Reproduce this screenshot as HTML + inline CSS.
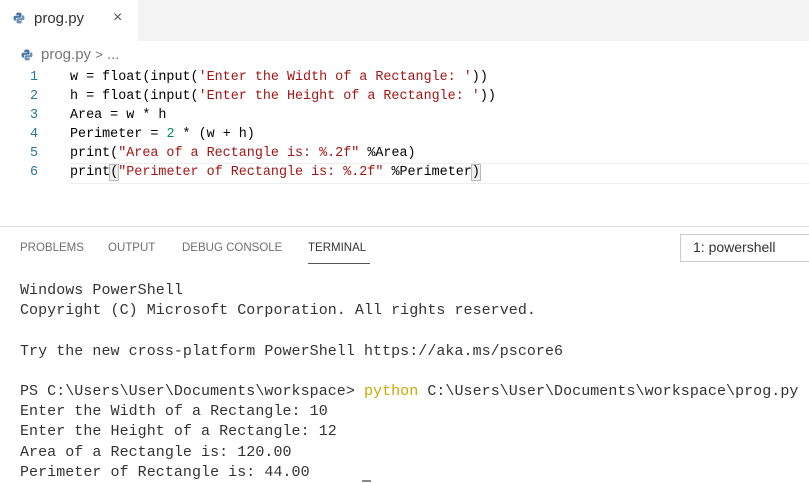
<!DOCTYPE html>
<html><head><style>
*{margin:0;padding:0;box-sizing:border-box}
body{width:809px;height:483px;overflow:hidden;background:#fff;position:relative;font-family:"Liberation Sans",sans-serif}
.tabbar{position:absolute;left:0;top:0;width:809px;height:41px;background:#f3f3f3}
.tab{position:absolute;left:0;top:0;width:138px;height:41px;background:#fff}
.abs{position:absolute;white-space:pre}
.code{font-family:"Liberation Mono",monospace;font-size:13.4px;color:#000}
.ln{font-family:"Liberation Mono",monospace;font-size:13.4px;color:#237893}
.s{color:#a31515}.n{color:#098658}
.term{font-family:"Liberation Mono",monospace;font-size:15px;color:#333}
.pt{font-size:11.5px;color:#6f6f6f;top:242px}
</style></head><body>
<div class="tabbar"><div class="tab"></div></div>
<svg class="abs" style="left:13px;top:12px" width="12" height="12" viewBox="0 0 12 12"><path d="M6 0.5C3 0.5 3.3 1.8 3.3 1.8V3.2h2.8v.5H2.2S0.5 3.5 0.5 6.1s1.5 2.5 1.5 2.5h.9V7.3s-.1-1.5 1.5-1.5h2.7s1.4 0 1.4-1.4V2S8.7.5 6 .5z" fill="#4a76a8"/><path d="M6 11.5c3 0 2.7-1.3 2.7-1.3V8.8H5.9v-.5h3.9s1.7.2 1.7-2.4-1.5-2.5-1.5-2.5h-.9v1.3s.1 1.5-1.5 1.5H4.9s-1.4 0-1.4 1.4V10S3.3 11.5 6 11.5z" fill="#6d92bd"/></svg>
<div class="abs" style="left:34px;top:10px;font-size:15px;color:#333">prog.py</div>
<div class="abs" style="left:113px;top:9px;font-size:16px;color:#555">×</div>
<svg class="abs" style="left:21px;top:49px" width="12" height="12" viewBox="0 0 12 12"><path d="M6 0.5C3 0.5 3.3 1.8 3.3 1.8V3.2h2.8v.5H2.2S0.5 3.5 0.5 6.1s1.5 2.5 1.5 2.5h.9V7.3s-.1-1.5 1.5-1.5h2.7s1.4 0 1.4-1.4V2S8.7.5 6 .5z" fill="#4a76a8"/><path d="M6 11.5c3 0 2.7-1.3 2.7-1.3V8.8H5.9v-.5h3.9s1.7.2 1.7-2.4-1.5-2.5-1.5-2.5h-.9v1.3s.1 1.5-1.5 1.5H4.9s-1.4 0-1.4 1.4V10S3.3 11.5 6 11.5z" fill="#6d92bd"/></svg>
<div class="abs" style="left:41px;top:46px;font-size:15px;color:#777">prog.py <span style="font-size:13px">&gt;</span> ...</div>
<div class="abs" style="left:70px;top:163px;width:739px;height:21px;border-top:1px solid #eee;border-bottom:1px solid #eee"></div>
<div class="abs ln" style="left:30px;top:68px;line-height:19px">1
2
3
4
5
6</div>
<div class="abs code" style="left:70px;top:68px;line-height:19px">w = float(input(<span class="s">'Enter the Width of a Rectangle: '</span>))
h = float(input(<span class="s">'Enter the Height of a Rectangle: '</span>))
Area = w * h
Perimeter = <span class="n">2</span> * (w + h)
print(<span class="s">"Area of a Rectangle is: %.2f"</span> %Area)
print<span style="outline:1px solid #b9b9b9;background:#eee">(</span><span class="s">"Perimeter of Rectangle is: %.2f"</span> %Perimeter<span style="outline:1px solid #b9b9b9;background:#eee">)</span></div>
<div class="abs" style="left:0;top:226px;width:809px;height:1px;background:#ddd"></div>
<div class="abs pt" style="left:20px">PROBLEMS</div>
<div class="abs pt" style="left:108px">OUTPUT</div>
<div class="abs pt" style="left:182px">DEBUG CONSOLE</div>
<div class="abs pt" style="left:308px;color:#333">TERMINAL</div>
<div class="abs" style="left:308px;top:263px;width:62px;height:1px;background:#555"></div>
<div class="abs" style="left:680px;top:234px;width:135px;height:28px;border:1px solid #ccc;font-size:14px;color:#333;padding:4px 0 0 12px">1: powershell</div>
<div class="abs term" style="left:20px;top:281px;line-height:20.2px;letter-spacing:0.05px">Windows PowerShell
Copyright (C) Microsoft Corporation. All rights reserved.

Try the new cross-platform PowerShell https://aka.ms/pscore6

PS C:\Users\User\Documents\workspace&gt; <span style="color:#c9a800">python</span> C:\Users\User\Documents\workspace\prog.py
Enter the Width of a Rectangle: 10
Enter the Height of a Rectangle: 12
Area of a Rectangle is: 120.00
Perimeter of Rectangle is: 44.00</div>
<div class="abs" style="left:362px;top:480px;width:9px;height:2px;background:#888"></div>
</body></html>
